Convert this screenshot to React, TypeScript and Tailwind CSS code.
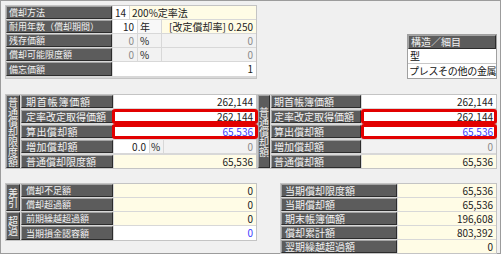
import React from "react";

const lab =
  "bg-[#5c5c5c] border border-t-[#a4a4a4] border-l-[#a4a4a4] border-r-[#2c2c2c] border-b-[#2c2c2c] text-[#f2f2f2] whitespace-nowrap overflow-hidden flex items-center leading-none";
const valBase = "flex items-center whitespace-nowrap overflow-hidden leading-none text-[10px]";
const white = "bg-white";
const yellow = "bg-[#fffce6]";
const gray = "bg-[#f2f2f2]";

function Val({
  children,
  className = "",
  color = "text-[#222]",
  left = false,
}: {
  children?: React.ReactNode;
  className?: string;
  color?: string;
  left?: boolean;
}) {
  return (
    <div className={`${valBase} ${left ? "justify-start pl-[3px]" : "justify-end pr-[3px]"} ${color} ${className}`}>
      {children}
    </div>
  );
}

function Red({ className }: { className: string }) {
  return <div className={`absolute border-[3px] border-[#e20000] rounded-[3px] pointer-events-none ${className}`} />;
}

function Vert({ text, className = "" }: { text: string; className?: string }) {
  return (
    <div className={`${lab} justify-center ${className}`}>
      <span className="[writing-mode:vertical-rl] text-[10px] leading-[11px]">{text}</span>
    </div>
  );
}

export default function App() {
  return (
    <div className="w-[503px] h-[258px] bg-white font-['Noto_Sans_CJK_JP','Noto_Sans',sans-serif]">
      <div className="w-[501px] h-[254px] border border-[#9c9c9c] bg-[#f0f0f0] pt-[4px] pl-[4px] pr-[3px] flex flex-col">
        {/* top */}
        <div className="flex">
          <div className="w-[252px] border border-[#c4c4c4] bg-[#d8d8d8] flex flex-col gap-px">
            <div className="h-[13px] flex gap-px">
              <div className={`${lab} w-[106px] pl-[2px] text-[9px]`}>償却方法</div>
              <div className="flex-1 flex gap-px">
                <Val left className={`${white} w-[16px] !pl-[2px]`}>14</Val>
                <Val left className={`${yellow} flex-1 !pl-[2px]`}>200%定率法</Val>
              </div>
            </div>
            <div className="h-[13px] flex gap-px">
              <div className={`${lab} w-[106px] pl-[2px] text-[9px]`}>耐用年数（償却期間）</div>
              <div className="flex-1 flex gap-px">
                <Val className={`${white} w-[24px]`}>10</Val>
                <Val left className={`bg-[#f8f8f8] w-[23px] !pl-[2px]`}>年</Val>
                <Val className={`${yellow} flex-1`}>[改定償却率] 0.250</Val>
              </div>
            </div>
            <div className="h-[13px] flex gap-px">
              <div className={`${lab} w-[106px] pl-[2px] text-[9px]`}>残存価額</div>
              <div className="flex-1 flex gap-px">
                <Val color="text-[#8a8a8a]" className={`${gray} w-[24px]`}>0</Val>
                <Val left className={`${gray} w-[23px] !pl-[2px]`}>%</Val>
                <Val color="text-[#8a8a8a]" className={`${gray} flex-1`}>0</Val>
              </div>
            </div>
            <div className="h-[13px] flex gap-px">
              <div className={`${lab} w-[106px] pl-[2px] text-[9px]`}>償却可能限度額</div>
              <div className="flex-1 flex gap-px">
                <Val color="text-[#8a8a8a]" className={`${gray} w-[24px]`}>0</Val>
                <Val left className={`${gray} w-[23px] !pl-[2px]`}>%</Val>
                <Val color="text-[#8a8a8a]" className={`${gray} flex-1`}>0</Val>
              </div>
            </div>
            <div className="h-[14px] flex gap-px">
              <div className={`${lab} w-[106px] pl-[2px] text-[9px]`}>備忘価額</div>
              <Val className={`${white} flex-1`}>1</Val>
            </div>
          </div>
          <div className="ml-auto mt-[29px] w-[90px] h-[45px] border border-[#a0a0a0] bg-white flex flex-col text-[10px] leading-none">
            <div className={`${lab} h-[14px] pl-[2px]`}>構造／細目</div>
            <div className="h-[15px] flex items-center pl-[2px] text-[#111]">型</div>
            <div className="h-[15px] flex items-center pl-[1px] text-[#111] border-t border-[#c8c8c8] whitespace-nowrap tracking-[-0.3px]">
              プレスその他の金属
            </div>
          </div>
        </div>

        {/* middle */}
        <div className="flex mt-[15px]">
          <div className="w-[252px] border border-[#c4c4c4] bg-[#d8d8d8] flex gap-px">
            <Vert text="普通償却限度額" className="w-[14px]" />
            <div className="flex-1 flex flex-col gap-[2px]">
              <div className="h-[13px] flex gap-px">
                <div className={`${lab} w-[92px] pl-[4px] text-[10px] tracking-[0.8px]`}>期首帳簿価額</div>
                <Val className={`${white} flex-1`}>262,144</Val>
              </div>
              <div className="h-[13px] flex gap-px">
                <div className={`${lab} w-[92px] pl-[4px] text-[10px]`}>定率改定取得価額</div>
                <div className="relative flex-1 flex">
                  <Val className={`${white} flex-1`}>262,144</Val>
                  <Red className="top-[-1px] bottom-[-1px] left-[-2px] right-[-2px]" />
                </div>
              </div>
              <div className="h-[13px] flex gap-px">
                <div className={`${lab} w-[92px] pl-[4px] text-[10px] tracking-[0.4px]`}>算出償却額</div>
                <div className="relative flex-1 flex">
                  <Val color="text-[#3a3aff]" className={`${white} flex-1`}>65,536</Val>
                  <Red className="top-[-1px] bottom-[-1px] left-[-2px] right-[-2px]" />
                </div>
              </div>
              <div className="h-[13px] flex gap-px">
                <div className={`${lab} w-[92px] pl-[4px] text-[10px] tracking-[0.4px]`}>増加償却額</div>
                <div className="flex-1 flex gap-px">
                  <Val className={`${white} w-[35px]`}>0.0</Val>
                  <Val left className={`${gray} w-[13px] !pl-[1px]`}>%</Val>
                  <Val color="text-[#8a8a8a]" className={`${gray} flex-1`}>0</Val>
                </div>
              </div>
              <div className="h-[13px] flex gap-px">
                <div className={`${lab} w-[92px] pl-[4px] text-[10px]`}>普通償却限度額</div>
                <Val className={`${yellow} flex-1`}>65,536</Val>
              </div>
            </div>
          </div>
          <div className="w-[240px] border border-[#c4c4c4] bg-[#d8d8d8] flex gap-px">
            <Vert text="普通償却額" className="w-[12px]" />
            <div className="flex-1 flex flex-col gap-[2px]">
              <div className="h-[13px] flex gap-px">
                <div className={`${lab} w-[90px] pl-[2px] text-[10px]`}>期首帳簿価額</div>
                <Val className={`${white} flex-1`}>262,144</Val>
              </div>
              <div className="h-[13px] flex gap-px">
                <div className={`${lab} w-[90px] pl-[2px] text-[10px]`}>定率改定取得価額</div>
                <div className="relative flex-1 flex">
                  <Val className={`${white} flex-1`}>262,144</Val>
                  <Red className="top-[-1px] bottom-[-1px] left-[-1px] right-[-1px]" />
                </div>
              </div>
              <div className="h-[13px] flex gap-px">
                <div className={`${lab} w-[90px] pl-[2px] text-[10px]`}>算出償却額</div>
                <div className="relative flex-1 flex">
                  <Val color="text-[#3a3aff]" className={`${white} flex-1`}>65,536</Val>
                  <Red className="top-[-1px] bottom-[-1px] left-[-1px] right-[-1px]" />
                </div>
              </div>
              <div className="h-[13px] flex gap-px">
                <div className={`${lab} w-[90px] pl-[2px] text-[10px]`}>増加償却額</div>
                <Val color="text-[#8a8a8a]" className={`${gray} flex-1`}>0</Val>
              </div>
              <div className="h-[13px] flex gap-px">
                <div className={`${lab} w-[90px] pl-[2px] text-[10px]`}>普通償却額</div>
                <Val className={`${yellow} flex-1`}>65,536</Val>
              </div>
            </div>
          </div>
        </div>

        {/* bottom */}
        <div className="flex mt-[14px] items-start">
          <div className="w-[252px] border border-[#c4c4c4] bg-[#d8d8d8] flex gap-px">
            <div className="w-[14px] flex flex-col gap-px">
              <Vert text="差引" className="h-[27px]" />
              <Vert text="超過" className="h-[28px]" />
            </div>
            <div className="flex-1 flex flex-col gap-px">
              <div className="h-[13px] flex gap-px">
                <div className={`${lab} w-[92px] pl-[4px] text-[9px]`}>償却不足額</div>
                <Val className={`${yellow} flex-1`}>0</Val>
              </div>
              <div className="h-[13px] flex gap-px">
                <div className={`${lab} w-[92px] pl-[4px] text-[9px]`}>償却超過額</div>
                <Val className={`${yellow} flex-1`}>0</Val>
              </div>
              <div className="h-[13px] flex gap-px">
                <div className={`${lab} w-[92px] pl-[4px] text-[9px]`}>前期繰越超過額</div>
                <Val className={`${yellow} flex-1`}>0</Val>
              </div>
              <div className="h-[14px] flex gap-px">
                <div className={`${lab} w-[92px] pl-[4px] text-[9px]`}>当期損金認容額</div>
                <Val color="text-[#3a3aff]" className={`${white} flex-1`}>0</Val>
              </div>
            </div>
          </div>
          <div className="ml-[23px] w-[217px] border border-[#c4c4c4] bg-[#d8d8d8] flex flex-col gap-px">
            {[
              ["当期償却限度額", "65,536"],
              ["当期償却額", "65,536"],
              ["期末帳簿価額", "196,608"],
              ["償却累計額", "803,392"],
              ["翌期繰越超過額", "0"],
            ].map(([l, v]) => (
              <div key={l} className="h-[13px] flex gap-px">
                <div className={`${lab} w-[116px] pl-[3px] text-[10px]`}>{l}</div>
                <Val className={`${yellow} flex-1`}>{v}</Val>
              </div>
            ))}
          </div>
        </div>
      </div>
    </div>
  );
}
